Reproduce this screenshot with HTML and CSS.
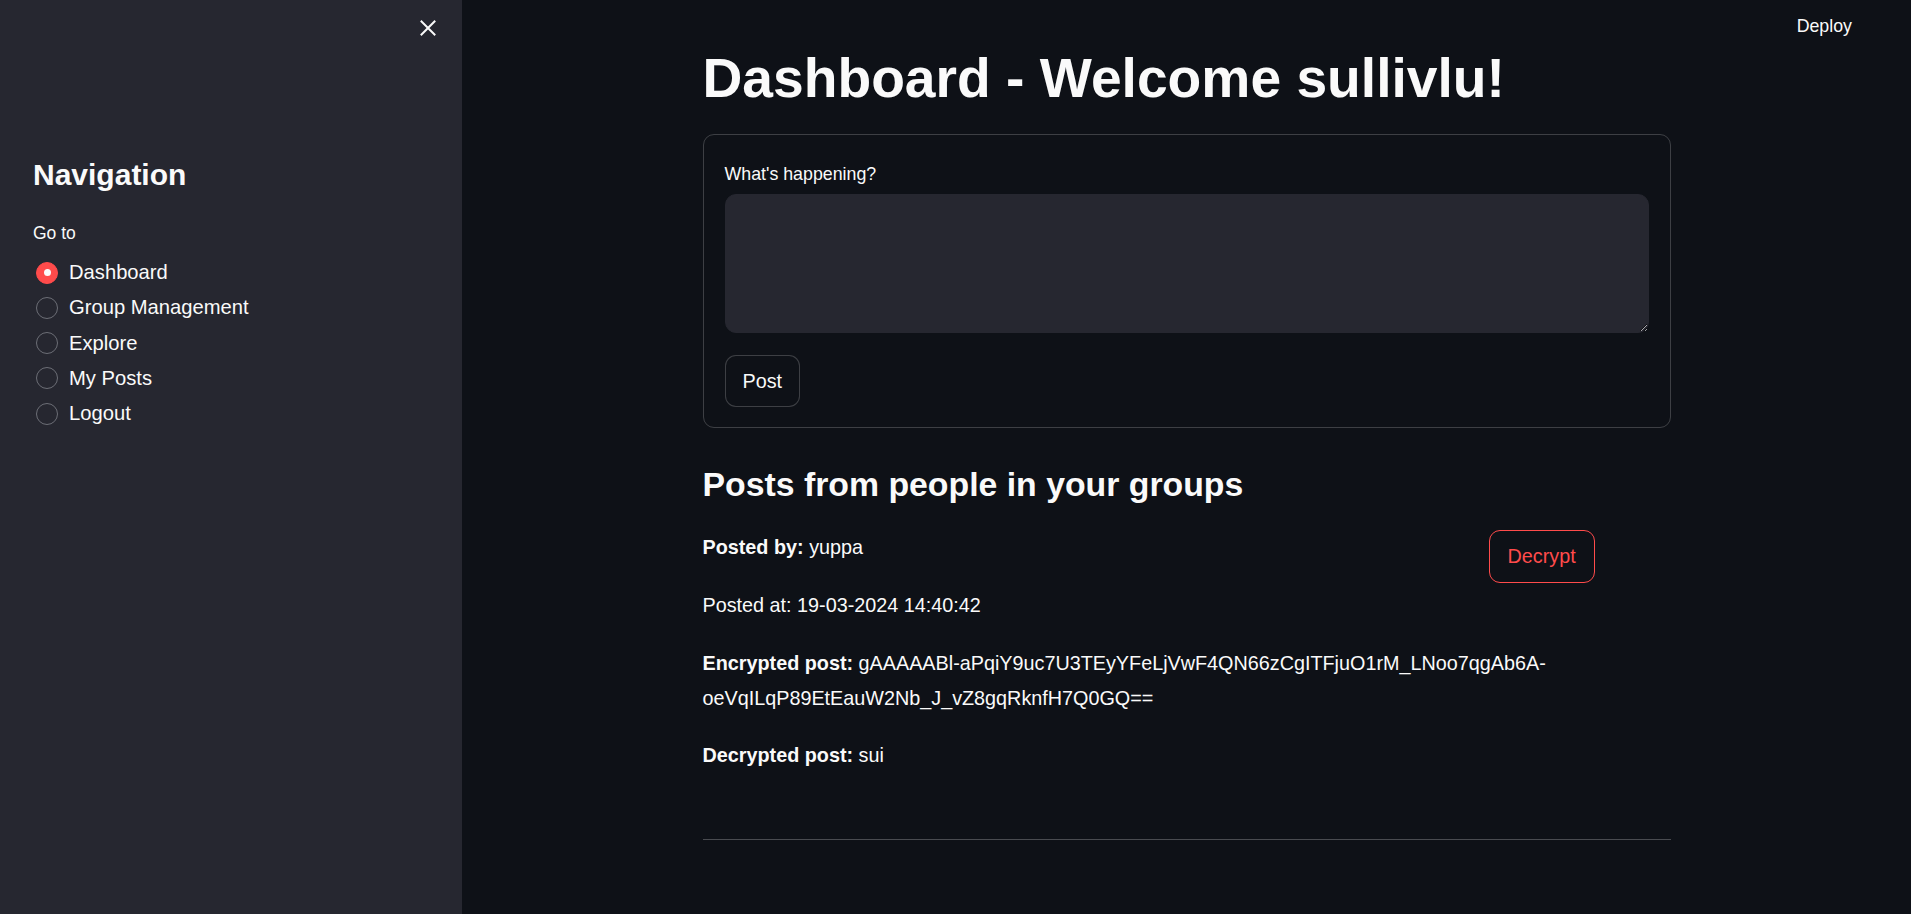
FILE: index.html
```html
<!DOCTYPE html>
<html lang="en">
<head>
<meta charset="utf-8">
<title>Dashboard</title>
<link rel="stylesheet" href="styles.css">
</head>
<body>
  <aside class="sidebar">
    <div class="sidebar-top">
      <button class="close-btn" aria-label="Close sidebar">
        <svg width="16" height="16" viewBox="0 0 16 16"><path d="M1.5 1.5 L14.5 14.5 M14.5 1.5 L1.5 14.5" stroke="#fafafa" stroke-width="2" stroke-linecap="square" fill="none"/></svg>
      </button>
    </div>
    <h2 class="nav-title">Navigation</h2>
    <div class="nav-label">Go to</div>
    <div class="radio-list">
      <div class="radio-item selected"><span class="radio-dot"></span><span class="radio-text">Dashboard</span></div>
      <div class="radio-item"><span class="radio-dot"></span><span class="radio-text">Group Management</span></div>
      <div class="radio-item"><span class="radio-dot"></span><span class="radio-text">Explore</span></div>
      <div class="radio-item"><span class="radio-dot"></span><span class="radio-text">My Posts</span></div>
      <div class="radio-item"><span class="radio-dot"></span><span class="radio-text">Logout</span></div>
    </div>
  </aside>
  <main class="main">
    <div class="deploy">Deploy</div>
    <div class="content">
      <h1 class="title">Dashboard - Welcome sullivlu!</h1>
      <div class="form">
        <label class="form-label" for="post">What's happening?</label>
        <textarea id="post" class="textarea"></textarea>
        <button class="btn">Post</button>
      </div>
      <h3 class="subtitle">Posts from people in your groups</h3>
      <div class="post-row">
        <div class="post-col"><p class="text"><b>Posted by:</b> <span>yuppa</span></p></div>
        <div class="btn-col"><button class="btn btn-red">Decrypt</button></div>
      </div>
      <p class="text posted-at">Posted at: 19-03-2024 14:40:42</p>
      <p class="text enc"><b>Encrypted post:</b> <span>gAAAAABl-aPqiY9uc7U3TEyYFeLjVwF4QN66zCgITFjuO1rM_LNoo7qgAb6A-</span><span>oeVqILqP89EtEauW2Nb_J_vZ8gqRknfH7Q0GQ==</span></p>
      <p class="text dec"><b>Decrypted post:</b> <span>sui</span></p>
      <hr class="divider">
    </div>
  </main>
</body>
</html>
```
FILE: styles.css
```css
* { box-sizing: border-box; }
html, body { margin: 0; height: 100%; }
body {
  display: flex;
  background: #0e1117;
  color: #fafafa;
  font-family: "Liberation Sans", Arial, sans-serif;
  overflow: hidden;
  color-scheme: dark;
}
.sidebar {
  width: 462px;
  flex: none;
  height: 100vh;
  background: #262730;
  padding: 0 33px;
}
.sidebar-top {
  display: flex;
  justify-content: flex-end;
  padding-top: 20px;
  margin-right: -7px;
}
.close-btn {
  width: 16px;
  height: 16px;
  padding: 0;
  border: 0;
  background: none;
  display: block;
}
.close-btn svg { display: block; }
.nav-title {
  margin: 121px 0 0;
  font-size: 30px;
  line-height: 36px;
  font-weight: 700;
}
.nav-label {
  margin-top: 28px;
  font-size: 17.5px;
  line-height: 24px;
}
.radio-list { margin-top: 10px; }
.radio-item {
  display: flex;
  align-items: center;
  height: 35.25px;
  font-size: 20.2px;
}
.radio-dot {
  width: 22px;
  height: 22px;
  margin-left: 3px;
  margin-right: 11px;
  border-radius: 50%;
  border: 1.5px solid #6c6e76;
  flex: none;
  position: relative;
}
.radio-item.selected .radio-dot {
  background: #ff4b4b;
  border-color: #ff4b4b;
}
.radio-item.selected .radio-dot::after {
  content: "";
  position: absolute;
  left: 50%;
  top: 50%;
  width: 7px;
  height: 7px;
  margin: -3.5px 0 0 -3.5px;
  border-radius: 50%;
  background: #fafafa;
}
.main {
  flex: 1;
  height: 100vh;
  position: relative;
  overflow: hidden;
}
.deploy {
  position: absolute;
  top: 14px;
  right: 59px;
  font-size: 17.8px;
  line-height: 24px;
}
.content {
  width: 968px;
  margin: 0 auto;
  padding-top: 46px;
}
.title {
  margin: 0;
  font-size: 55.2px;
  line-height: 65px;
  font-weight: 700;
}
.form {
  margin-top: 23px;
  border: 1px solid rgba(250, 250, 250, 0.2);
  border-radius: 11px;
  padding: 27px 21px 20px;
}
.form-label {
  display: block;
  font-size: 17.8px;
  line-height: 24px;
}
.textarea {
  display: block;
  margin-top: 8px;
  width: 100%;
  height: 139px;
  background: #262730;
  border: 1px solid #262730;
  border-radius: 11px;
  color: #fafafa;
  resize: vertical;
  font-family: inherit;
  font-size: 19.8px;
  padding: 14px 16px;
  outline: none;
}
.btn {
  display: inline-flex;
  align-items: center;
  justify-content: center;
  height: 52px;
  padding: 0 17px;
  background: #0e1117;
  color: #fafafa;
  border: 1px solid rgba(250, 250, 250, 0.2);
  border-radius: 11px;
  font-family: inherit;
  font-size: 19.8px;
}
.form .btn { margin-top: 22px; }
.btn-red {
  height: 53px;
  padding: 0 18px;
  color: #ff4b4b;
  border-color: #ff4b4b;
}
.subtitle {
  margin: 36px 0 0;
  font-size: 33.8px;
  line-height: 41.5px;
  font-weight: 700;
}
.post-row {
  display: flex;
  margin-top: 24.5px;
}
.post-col { flex: 1; }
.btn-col { width: 182px; flex: none; }
.text {
  margin: 0;
  font-size: 19.8px;
  line-height: 35px;
}
.text b { font-weight: 700; }
.posted-at { margin-top: 5px; }
.enc { margin-top: 23px; }
.dec { margin-top: 22px; }
.divider {
  margin: 66px 0 0;
  border: 0;
  height: 1px;
  background: rgba(250, 250, 250, 0.25);
}
```
